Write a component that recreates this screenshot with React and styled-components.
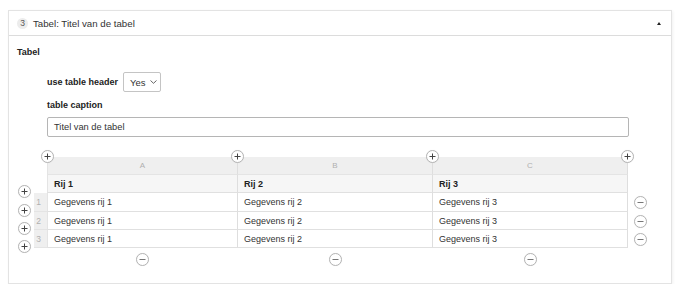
import React from "react";
import styled, { createGlobalStyle } from "styled-components";

const Global = createGlobalStyle`
  html, body { margin: 0; padding: 0; background: #fff; }
  body { font-family: "Liberation Sans", Arial, sans-serif; color: #333; }
  * { box-sizing: border-box; }
`;

const Panel = styled.section`
  margin: 10px 9px 0 8px;
  height: 274px;
  border: 1px solid #e3e3e3;
  box-shadow: 1px 1px 3px rgba(0, 0, 0, 0.06);
  background: #fff;
`;

const Header = styled.header`
  height: 25px;
  border-bottom: 1px solid #dcdcdc;
  display: flex;
  align-items: center;
  padding: 0 10px 0 8px;
`;

const Badge = styled.span`
  width: 11px;
  height: 11px;
  border-radius: 50%;
  background: #ececec;
  font-size: 8.5px;
  color: #555;
  display: flex;
  align-items: center;
  justify-content: center;
  margin-right: 5px;
`;

const Title = styled.span`
  font-size: 9.7px;
  color: #333;
  flex: 1;
`;

const Caret = styled.span`
  width: 0;
  height: 0;
  border-left: 2px solid transparent;
  border-right: 2px solid transparent;
  border-bottom: 3px solid #222;
`;

const Body = styled.div`
  padding: 11px 0 0 8px;
`;

const SectionLabel = styled.div`
  font-size: 9px;
  font-weight: bold;
  line-height: 11px;
  color: #222;
`;

const Indent = styled.div`
  padding-left: 30px;
`;

const FieldRow = styled.div`
  display: flex;
  align-items: center;
  gap: 5px;
  margin-top: ${(p) => p.$top || 0}px;
`;

const FieldLabel = styled.label`
  font-size: 9px;
  font-weight: bold;
  line-height: 11px;
  color: #222;
  display: block;
  margin-top: ${(p) => p.$top || 0}px;
`;

const Select = styled.div`
  width: 38px;
  height: 20px;
  border: 1px solid #c4c4c4;
  border-radius: 2px;
  display: flex;
  align-items: center;
  padding-left: 6px;
  gap: 4px;
  font-size: 9.5px;
  color: #333;
`;

const TextInput = styled.div`
  width: 582px;
  height: 20px;
  margin-top: 6px;
  border: 1px solid #b5b5b5;
  border-radius: 2px;
  display: flex;
  align-items: center;
  padding-left: 6px;
  font-size: 9.3px;
  color: #333;
`;

const Grid = styled.div`
  margin-top: 20px;
  display: grid;
  grid-template-columns: 17px 13px 191px 195px 195px 24px;
  grid-template-rows: 18px 18px 19px 18px 18px 22px;
`;

const Empty = styled.div``;

const Gutter = styled.div`
  position: relative;
`;

const ColHead = styled.div`
  position: relative;
  background: #efefef;
  border-right: 1px solid #dedede;
  ${(p) => (p.$first ? "border-left: 1px solid #e4e4e4;" : "")}
  border-bottom: 1px solid #e4e4e4;
  display: flex;
  align-items: center;
  justify-content: center;
  font-size: 8px;
  color: #b0b0b0;
`;

const HeadCell = styled.div`
  background: #f6f6f6;
  border-right: 1px solid #dedede;
  ${(p) => (p.$first ? "border-left: 1px solid #e4e4e4;" : "")}
  border-bottom: 1px solid #e0e0e0;
  display: flex;
  align-items: center;
  padding-left: 6px;
  font-size: 9px;
  font-weight: bold;
  color: #222;
`;

const NumCell = styled.div`
  background: #efefef;
  border-bottom: 1px solid #e4e4e4;
  display: flex;
  align-items: center;
  justify-content: flex-end;
  padding-right: 6px;
  font-size: 8.5px;
  color: #b0b0b0;
`;

const DataCell = styled.div`
  border-right: 1px solid #dedede;
  ${(p) => (p.$first ? "border-left: 1px solid #e4e4e4;" : "")}
  border-bottom: 1px solid #e0e0e0;
  display: flex;
  align-items: center;
  padding-left: 6px;
  font-size: 9px;
  color: #333;
`;

const Centered = styled.div`
  display: flex;
  align-items: center;
  justify-content: center;
`;

const RoundButton = styled.button`
  width: 13px;
  height: 13px;
  padding: 0;
  border-radius: 50%;
  border: 1px solid #b4b4b4;
  background: #fff;
  box-shadow: 0 0 1px rgba(0, 0, 0, 0.08);
  display: flex;
  align-items: center;
  justify-content: center;
  cursor: pointer;
  ${(p) =>
    p.$at === "colLeft"
      ? "position: absolute; left: -7px; top: -7px;"
      : p.$at === "colRight"
      ? "position: absolute; right: -7px; top: -7px;"
      : p.$at === "rowBottom"
      ? "position: absolute; left: 1px; bottom: -5px;"
      : ""}
`;

const Sign = ({ plus }) => (
  <svg width="7" height="7" viewBox="0 0 7 7">
    <line x1="0.5" y1="3.5" x2="6.5" y2="3.5" stroke={plus ? "#444" : "#777"} strokeWidth="1" />
    {plus && <line x1="3.5" y1="0.5" x2="3.5" y2="6.5" stroke="#444" strokeWidth="1" />}
  </svg>
);

const Chevron = () => (
  <svg width="7" height="4" viewBox="0 0 7 4">
    <polyline points="0.5,0.5 3.5,3.3 6.5,0.5" fill="none" stroke="#555" strokeWidth="0.9" />
  </svg>
);

const cols = ["A", "B", "C"];
const headers = ["Rij 1", "Rij 2", "Rij 3"];
const rows = [1, 2, 3];

export default function App() {
  return (
    <>
      <Global />
      <Panel>
        <Header>
          <Badge>3</Badge>
          <Title>Tabel: Titel van de tabel</Title>
          <Caret />
        </Header>
        <Body>
          <SectionLabel>Tabel</SectionLabel>
          <Indent>
            <FieldRow $top={14}>
              <FieldLabel>use table header</FieldLabel>
              <Select>
                Yes <Chevron />
              </Select>
            </FieldRow>
            <FieldLabel $top={8}>table caption</FieldLabel>
            <TextInput>Titel van de tabel</TextInput>
          </Indent>
          <Grid>
            <Empty />
            <Empty />
            {cols.map((c, i) => (
              <ColHead key={c} $first={i === 0}>
                <RoundButton $at="colLeft" aria-label="kolom toevoegen">
                  <Sign plus />
                </RoundButton>
                {i === cols.length - 1 && (
                  <RoundButton $at="colRight" aria-label="kolom toevoegen">
                    <Sign plus />
                  </RoundButton>
                )}
                {c}
              </ColHead>
            ))}
            <Empty />

            <Gutter>
              <RoundButton $at="rowBottom" aria-label="rij toevoegen">
                <Sign plus />
              </RoundButton>
            </Gutter>
            <Empty />
            {headers.map((h, i) => (
              <HeadCell key={h} $first={i === 0}>
                {h}
              </HeadCell>
            ))}
            <Empty />

            {rows.map((r) => (
              <React.Fragment key={r}>
                <Gutter>
                  <RoundButton $at="rowBottom" aria-label="rij toevoegen">
                    <Sign plus />
                  </RoundButton>
                </Gutter>
                <NumCell>{r}</NumCell>
                {rows.map((c, i) => (
                  <DataCell key={c} $first={i === 0}>
                    Gegevens rij {c}
                  </DataCell>
                ))}
                <Centered>
                  <RoundButton aria-label="rij verwijderen">
                    <Sign />
                  </RoundButton>
                </Centered>
              </React.Fragment>
            ))}

            <Empty />
            <Empty />
            {cols.map((c) => (
              <Centered key={c}>
                <RoundButton aria-label="kolom verwijderen">
                  <Sign />
                </RoundButton>
              </Centered>
            ))}
            <Empty />
          </Grid>
        </Body>
      </Panel>
    </>
  );
}
